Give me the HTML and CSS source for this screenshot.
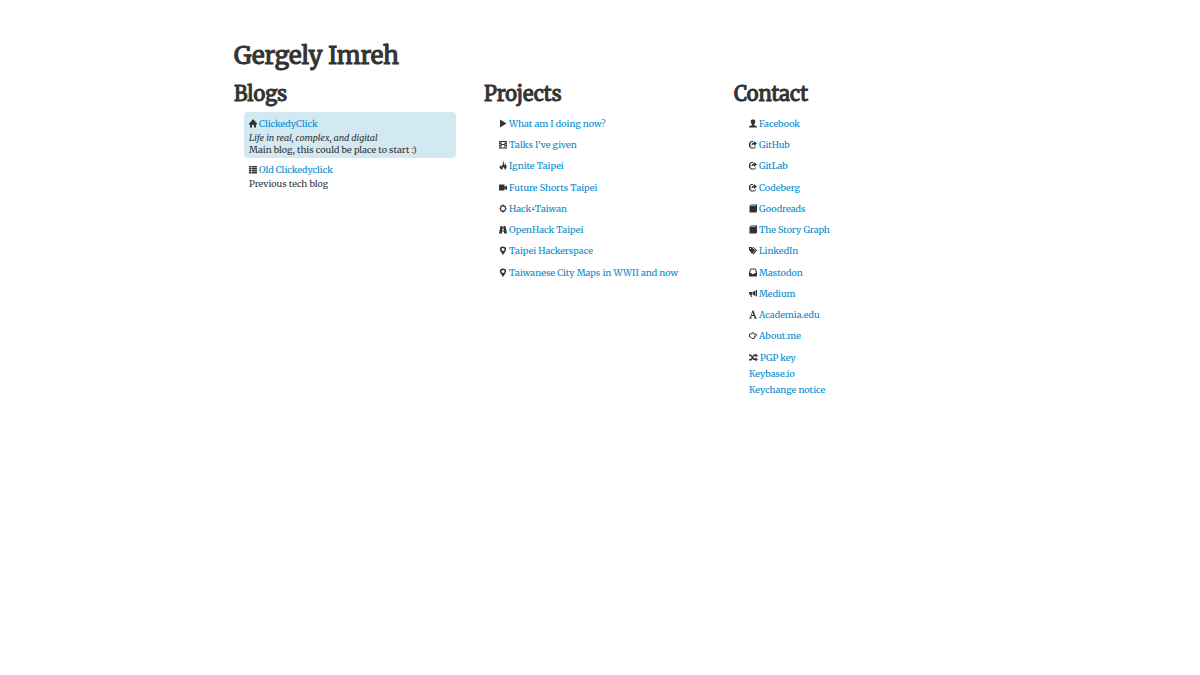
FILE: index.html
```
<!DOCTYPE html>
<html lang="en">
<head>
  <meta charset="UTF-8">
  <meta name="viewport" content="width=device-width, initial-scale=1">
  <title>Gergely Imreh</title>
  <link rel="stylesheet" href="styles.css">
</head>
<body>
  <svg class="sprite" aria-hidden="true">
    <symbol id="home" viewBox="0 0 16 18"><path d="M7 1h2l7 8v2h-2v6h-4v-5H6v5H2v-6H0V9l2-2 3-3z"/></symbol>
    <symbol id="list" viewBox="0 0 16 18"><path d="M0 2h4v3H0zm5 0h11v3H5zM0 6h4v3H0zm5 0h11v3H5zM0 10h4v3H0zm5 0h11v3H5zM0 14h4v3H0zm5 0h11v3H5z"/></symbol>
    <symbol id="play" viewBox="0 0 16 18"><path d="M2 1l13 8-13 8z"/></symbol>
    <symbol id="film" viewBox="0 0 16 18"><path fill-rule="evenodd" d="M0 2h16v15H0zM1 4v2h2V4zm0 4v2h2V8zm0 4v3h2v-3zM5 4v4h6V4zm0 6v5h6v-5zm8-6v2h2V4zm0 4v2h2V8zm0 4v3h2v-3z"/></symbol>
    <symbol id="fire" viewBox="0 0 16 18"><path d="M8 0c4 4 1 6 2 8 1 1 2-1 1-4 6 6 5 11 0 14 1-3 0-4-2-6-1 2-3 3-2 6-7-3-7-7-4-10 0 2 1 3 2 3 2-3 4-6 3-11z"/></symbol>
    <symbol id="video" viewBox="0 0 16 18"><path d="M0 3h11v5l4-3h1v9h-1l-4-3v4H0z"/></symbol>
    <symbol id="cog" viewBox="0 0 16 18"><path fill-rule="evenodd" d="M7 1h2l1 2 3 0 0 3 2 2v2l-2 2 0 3-3 0-1 2H7l-1-2-3 0 0-3-2-2V8l2-2 0-3 3 0zM8 5a4 4 0 1 0 .1 0z"/></symbol>
    <symbol id="road" viewBox="0 0 16 18"><path fill-rule="evenodd" d="M3 2h4v3h2V2h4l3 15h-6v-4H6v4H0zM7 7l-1 4h4L9 7z"/></symbol>
    <symbol id="pin" viewBox="0 0 16 18"><path fill-rule="evenodd" d="M8 1c8 0 7 7 4 11l-4 6-4-6C1 8 0 1 8 1zm0 3a3 3 0 1 0 .1 0z"/></symbol>
    <symbol id="user" viewBox="0 0 16 18"><path d="M8 1c5 0 5 4 4 7l-2 3v1l6 3v2H0v-2l6-3v-1L4 8C3 5 3 1 8 1z"/></symbol>
    <symbol id="share" viewBox="0 0 16 18"><path d="M10 2l6 5-6 5V9c-3 0-4 1-5 3 0-5 2-7 5-7zM8 2v2H5L3 6v7l2 2h6l1-1 2-2v2l-3 3H4l-4-4V6l4-4z"/></symbol>
    <symbol id="book" viewBox="0 0 16 18"><path fill-rule="evenodd" d="M4 1h12v14l-2 2H1V4zm0 2L3 4h10l1-1z"/></symbol>
    <symbol id="tags" viewBox="0 0 16 18"><path fill-rule="evenodd" d="M0 2h5l7 7-6 7-6-8zm3 2a1 1 0 1 0 .1 0zM7 2h2l7 7-7 8-2-1 6-7z"/></symbol>
    <symbol id="inbox" viewBox="0 0 16 18"><path fill-rule="evenodd" d="M3 1h10l3 7v9H0V8zm1 2l-2 7h3l1 2h4l1-2h3l-2-7z"/></symbol>
    <symbol id="horn" viewBox="0 0 16 18"><path d="M14 2h2v13h-2zM13 3v11l-6-3V6zM0 6h6v5H5l1 5H4l-2-5H0z"/></symbol>
    <symbol id="font" viewBox="0 0 16 18"><path fill-rule="evenodd" d="M7 1h2l5 14 2 1v1h-6v-1l1-1-1-3H5l-1 3 2 1v1H0v-1l2-1zm0 4l-2 5h4z"/></symbol>
    <symbol id="hand" viewBox="0 0 16 18"><path fill="none" stroke="currentColor" stroke-width="2" d="M1 6h2l5-3 1 3h5c2 1 2 4 0 4h-3l1 2-2 1v2H6l-3-3H1z"/></symbol>
    <symbol id="random" viewBox="0 0 18 18"><path d="M0 3h4l7 8h2V9l5 4-5 4v-3H9L3 6H0zm13-2l5 4-5 4V6h-2l-2 2-2-2 2-3h4zM6 9l2 2-3 4H0v-3h3z"/></symbol>
  </svg>

  <div class="container">
    <h1>Gergely Imreh</h1>
    <div class="row">
      <section>
        <h2>Blogs</h2>
        <ul class="blogs">
          <li class="main">
            <svg class="icon"><use href="#home"/></svg><a href="#">ClickedyClick</a>
            <p><em>Life in real, complex, and digital</em><br>Main blog, this could be place to start :)</p>
          </li>
          <li>
            <svg class="icon"><use href="#list"/></svg><a href="#">Old Clickedyclick</a>
            <p>Previous tech blog</p>
          </li>
        </ul>
      </section>

      <section>
        <h2>Projects</h2>
        <ul class="links">
          <li><svg class="icon"><use href="#play"/></svg><a href="#">What am I doing now?</a></li>
          <li><svg class="icon"><use href="#film"/></svg><a href="#">Talks I've given</a></li>
          <li><svg class="icon"><use href="#fire"/></svg><a href="#">Ignite Taipei</a></li>
          <li><svg class="icon"><use href="#video"/></svg><a href="#">Future Shorts Taipei</a></li>
          <li><svg class="icon"><use href="#cog"/></svg><a href="#">Hack+Taiwan</a></li>
          <li><svg class="icon"><use href="#road"/></svg><a href="#">OpenHack Taipei</a></li>
          <li><svg class="icon"><use href="#pin"/></svg><a href="#">Taipei Hackerspace</a></li>
          <li><svg class="icon"><use href="#pin"/></svg><a href="#">Taiwanese City Maps in WWII and now</a></li>
        </ul>
      </section>

      <section>
        <h2>Contact</h2>
        <ul class="links">
          <li><svg class="icon"><use href="#user"/></svg><a href="#">Facebook</a></li>
          <li><svg class="icon"><use href="#share"/></svg><a href="#">GitHub</a></li>
          <li><svg class="icon"><use href="#share"/></svg><a href="#">GitLab</a></li>
          <li><svg class="icon"><use href="#share"/></svg><a href="#">Codeberg</a></li>
          <li><svg class="icon"><use href="#book"/></svg><a href="#">Goodreads</a></li>
          <li><svg class="icon"><use href="#book"/></svg><a href="#">The Story Graph</a></li>
          <li><svg class="icon"><use href="#tags"/></svg><a href="#">LinkedIn</a></li>
          <li><svg class="icon"><use href="#inbox"/></svg><a href="#">Mastodon</a></li>
          <li><svg class="icon"><use href="#horn"/></svg><a href="#">Medium</a></li>
          <li><svg class="icon"><use href="#font"/></svg><a href="#">Academia.edu</a></li>
          <li><svg class="icon"><use href="#hand"/></svg><a href="#">About.me</a></li>
          <li>
            <svg class="icon wide"><use href="#random"/></svg><a href="#">PGP key</a><br>
            <a href="#">Keybase.io</a><br>
            <a href="#">Keychange notice</a>
          </li>
        </ul>
      </section>
    </div>
  </div>
</body>
</html>
```
FILE: styles.css
```
body {
  margin: 0;
  padding: 40px 20px;
  background-color: #fff;
  color: #333;
  font-family: Merriweather, "DejaVu Serif", serif;
  font-size: 9px;
  line-height: 16px;
}
.sprite {
  display: none;
}
.container {
  max-width: 732px;
  margin: 0 auto;
}
h1, h2 {
  margin: 0;
  font-weight: normal;
  -webkit-text-stroke: 1px #333;
}
h1 {
  font-size: 24px;
  line-height: 32px;
}
h2 {
  margin: 6px 0 3px;
  font-size: 20px;
  line-height: 31px;
}
.row {
  display: grid;
  grid-template-columns: repeat(3, 1fr);
  column-gap: 18px;
}
ul {
  margin: 0 10px;
  padding: 0;
  list-style: none;
}
li {
  padding: 4px 5px 1px;
}
/* a little more air in every fourth row */
.links li:nth-child(4n+3) {
  padding-bottom: 2px;
}
.main {
  padding-bottom: 2px;
  background-color: #d3e9f2;
  border-radius: 4px;
}
p {
  margin: 0;
  line-height: 12px;
}
a {
  color: #08c;
  text-decoration: none;
}
a:hover {
  text-decoration: underline;
}
.icon {
  width: 8px;
  height: 9px;
  margin-right: 2px;
  vertical-align: -1px;
  fill: currentColor;
}
.icon.wide {
  width: 9px;
}
```
